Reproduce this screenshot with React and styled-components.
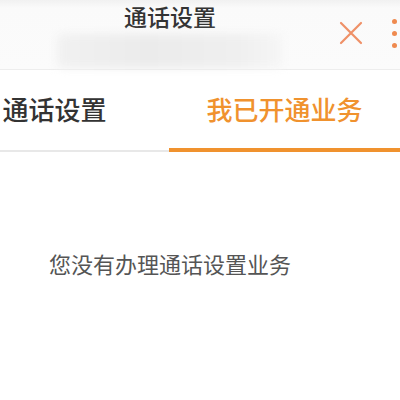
import React, { useState } from 'react';
import styled, { createGlobalStyle } from 'styled-components';

const GlobalStyle = createGlobalStyle`
  html, body {
    margin: 0;
    padding: 0;
    background: #ffffff;
    overflow: hidden;
  }
  body {
    font-family: "Noto Sans CJK SC", "Noto Sans", sans-serif;
  }
`;

const colors = {
  orange: '#f0922e',
  salmon: '#ef9067',
  dark: '#333333',
  grey: '#555555',
  line: '#e8e8e8',
};

// the screen is wider than the window; it is cropped on the left
const Screen = styled.div`
  width: 460px;
  margin-left: -60px;
  height: 400px;
  background: #fff;
`;

const Header = styled.header`
  position: relative;
  height: 69px;
  display: flex;
  flex-direction: column;
  align-items: center;
  background: linear-gradient(#f1f1f1 0, #fafafa 8px, #fbfbfb 100%);
  border-bottom: 1px solid #ededed;
`;

const Title = styled.h1`
  margin: 0;
  padding-top: 2px;
  font-size: 23px;
  line-height: 28px;
  font-weight: 500;
  color: ${colors.dark};
`;

const Redacted = styled.div`
  margin-top: 4px;
  width: 226px;
  height: 34px;
  background: linear-gradient(90deg, #f1f1f1, #ebebeb 40%, #efefef 80%, #f6f6f6);
  border-radius: 6px;
  filter: blur(4px);
`;

const Actions = styled.div`
  position: absolute;
  top: 18px;
  right: 3px;
  display: flex;
  align-items: center;
  gap: 29px;
`;

const Dots = styled.div`
  display: flex;
  flex-direction: column;
  gap: 7px;
  margin-top: 1px;

  span {
    width: 5px;
    height: 5px;
    border-radius: 50%;
    background: #ef8a4f;
  }
`;

const TabBar = styled.nav`
  display: grid;
  grid-template-columns: 229px 1fr;
  border-bottom: 2px solid ${colors.line};
`;

const Tab = styled.button`
  height: 82px;
  border: none;
  background: transparent;
  padding: 0 0 2px;
  margin-bottom: -2px;
  font-family: inherit;
  font-size: 26px;
  font-weight: 500;
  color: ${props => (props.active ? colors.orange : colors.dark)};
  border-bottom: 4px solid ${props => (props.active ? colors.orange : 'transparent')};
  cursor: pointer;
`;

const Empty = styled.p`
  margin: 0;
  padding-top: 98px;
  text-align: center;
  font-size: 22px;
  line-height: 26px;
  color: ${colors.grey};
`;

const CloseIcon = () => (
  <svg width="24" height="24" viewBox="0 0 24 24">
    <path d="M2 2 L22 22 M22 2 L2 22" stroke={colors.salmon} strokeWidth="2.2" strokeLinecap="round" />
  </svg>
);

const tabs = ['通话设置', '我已开通业务'];

const App = () => {
  const [active, setActive] = useState(1);

  return (
    <>
      <GlobalStyle />
      <Screen>
        <Header>
          <Title>通话设置</Title>
          <Redacted />
          <Actions>
            <CloseIcon />
            <Dots>
              <span />
              <span />
              <span />
            </Dots>
          </Actions>
        </Header>
        <TabBar>
          {tabs.map((t, i) => (
            <Tab key={t} active={i === active} onClick={() => setActive(i)}>
              {t}
            </Tab>
          ))}
        </TabBar>
        <Empty>您没有办理通话设置业务</Empty>
      </Screen>
    </>
  );
};

export default App;
